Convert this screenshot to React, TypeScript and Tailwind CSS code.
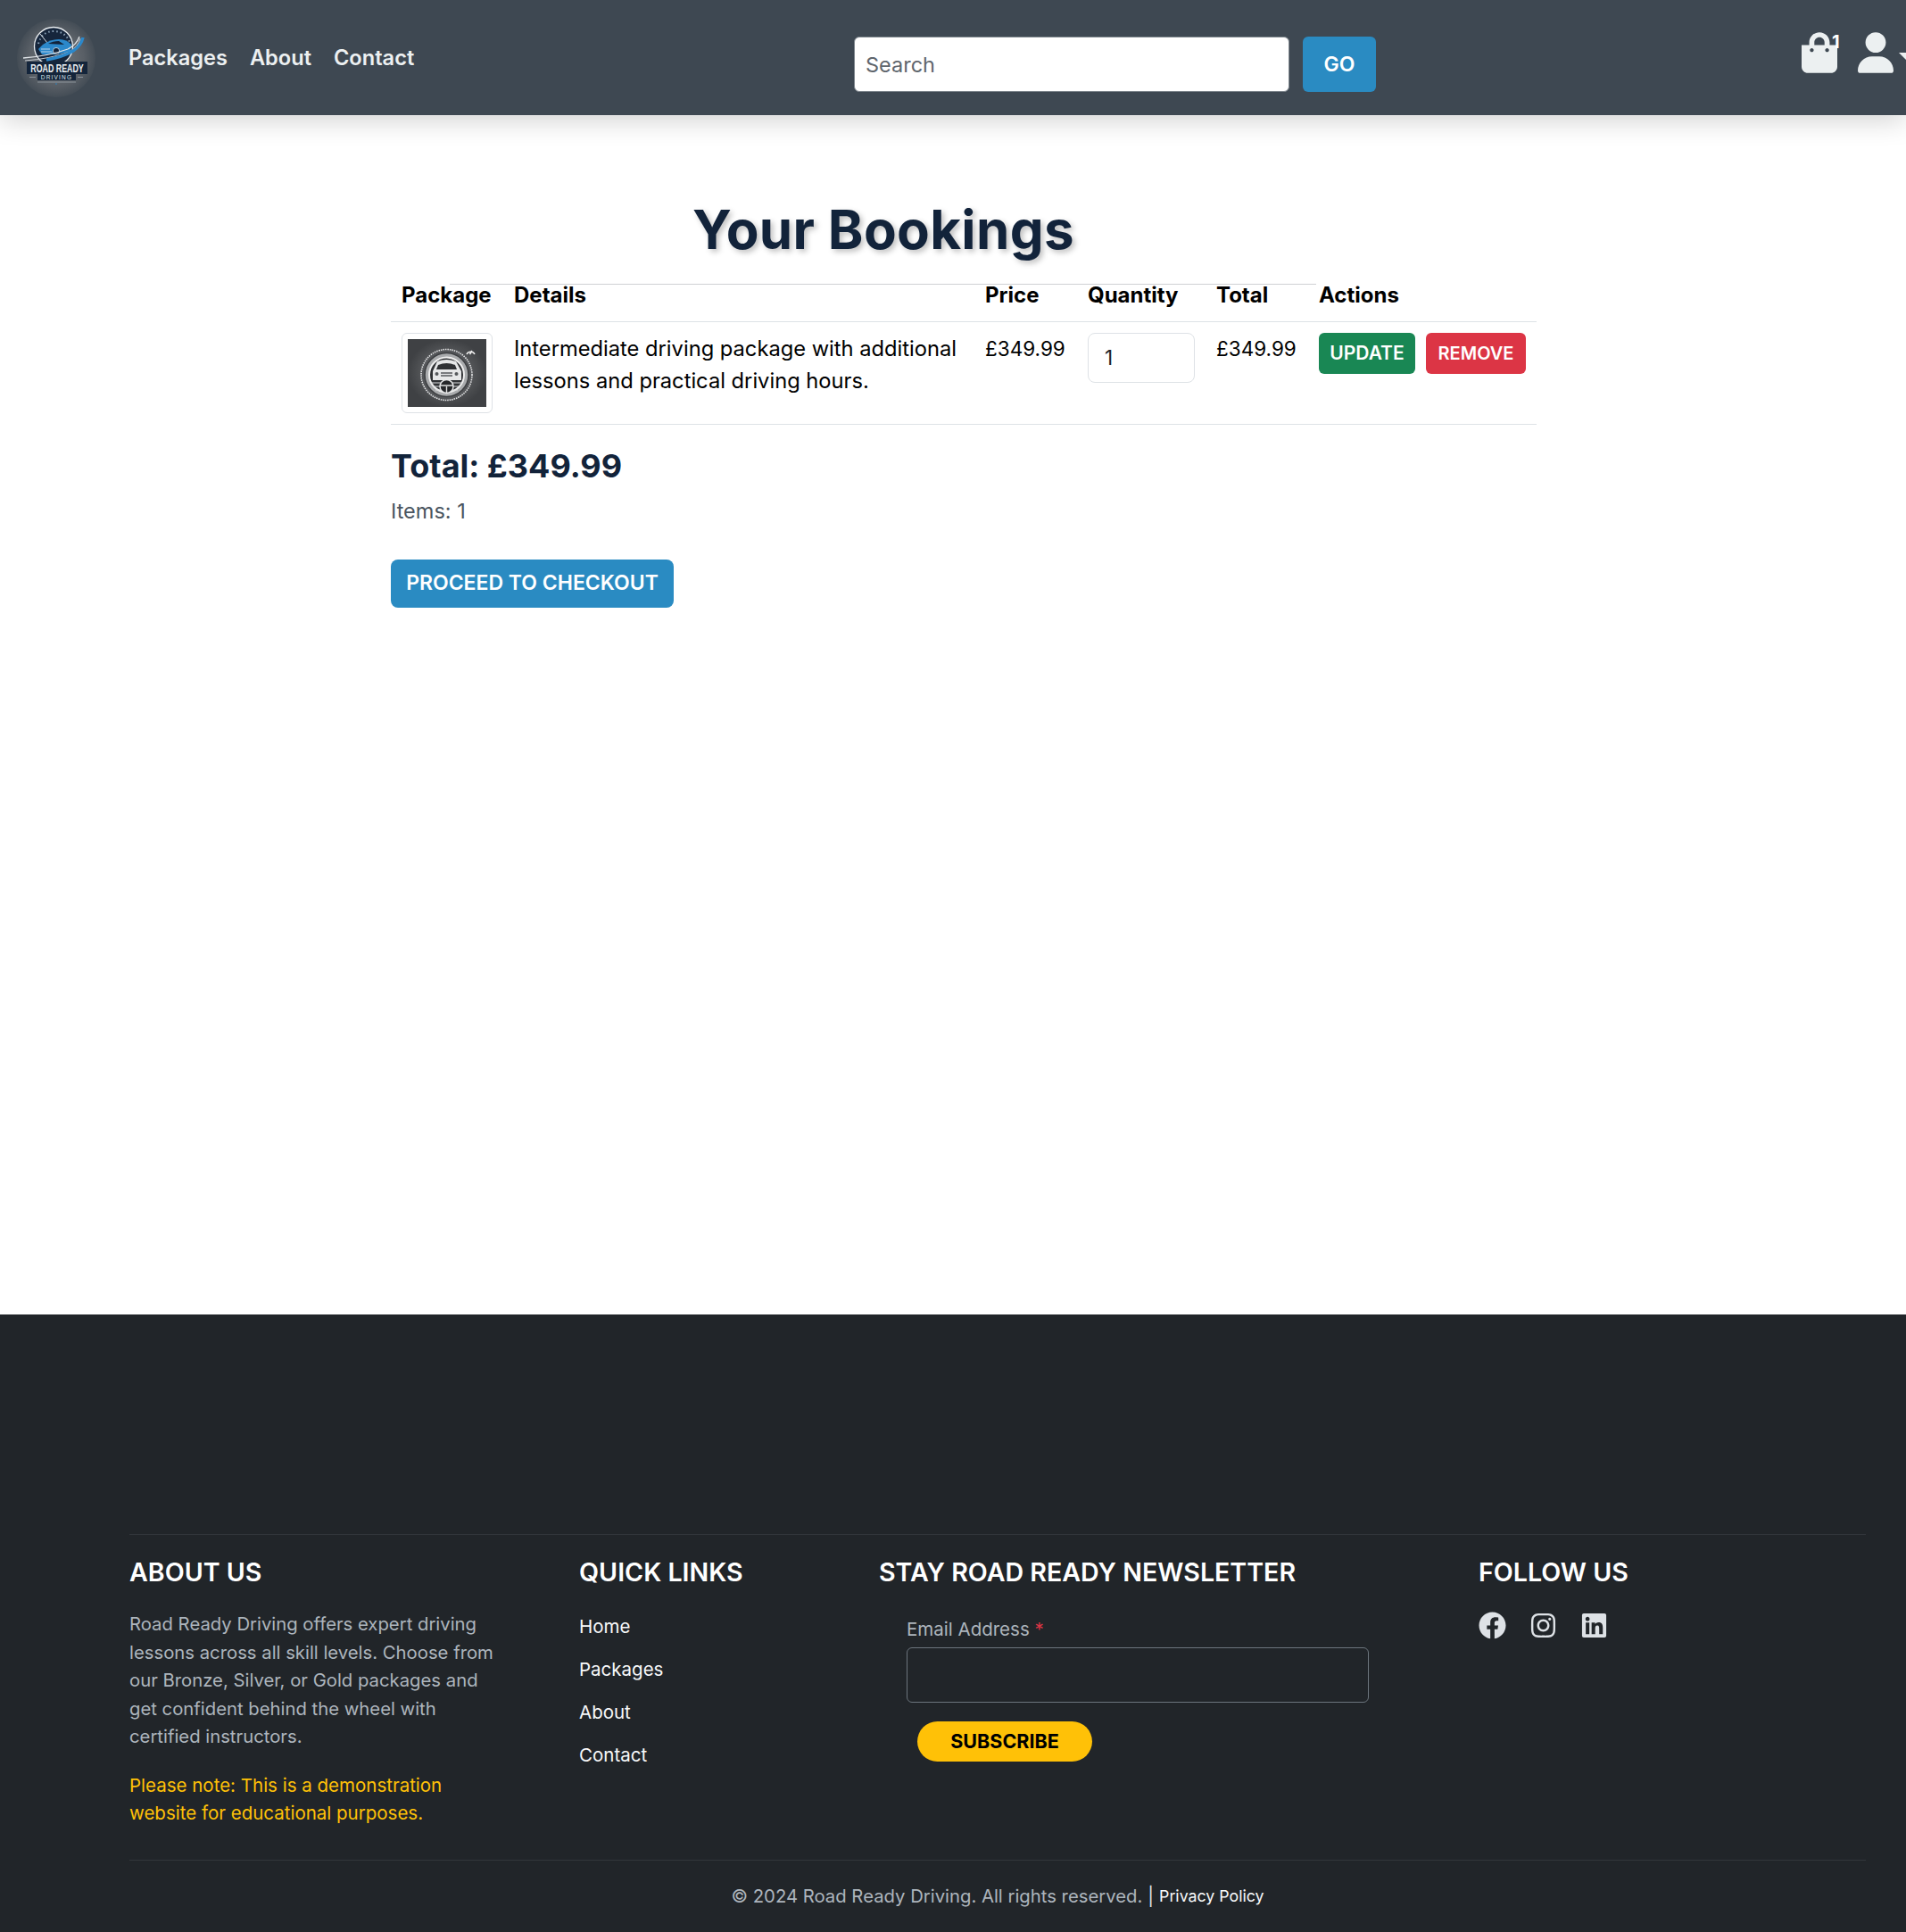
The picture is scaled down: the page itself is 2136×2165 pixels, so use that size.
import { FaFacebook, FaInstagram, FaLinkedin, FaShoppingBag } from "react-icons/fa";
import { FaUser } from "react-icons/fa6";

function Logo() {
  return (
    <svg viewBox="0 0 90 90" className="mt-[3px] h-[90px] w-[90px] shrink-0">
      <defs>
        <radialGradient id="logoBg">
          <stop offset="0%" stopColor="#73787d" />
          <stop offset="70%" stopColor="#595f66" />
          <stop offset="100%" stopColor="#444d56" />
        </radialGradient>
      </defs>
      <circle cx="45" cy="44" r="44" fill="url(#logoBg)" />
      {/* dial */}
      <circle cx="42" cy="31" r="21.5" fill="#16263c" stroke="#e8ecef" strokeWidth="1.3" />
      <path d="M25 28 Q29 14 42 14 Q55 14 60 26" fill="none" stroke="#8fa6bb" strokeWidth="2" strokeDasharray="1.5 3" />
      <path d="M27 17 L35 27" stroke="#d5dde4" strokeWidth="1" />
      {/* car */}
      <path d="M25 34 L30 29 Q38 23 48 23 Q57 23 62 29 L61 37 L44 40 H29 Z" fill="#2b88cb" />
      <path d="M36 28 Q41 25 48 25 L54 29 Z" fill="#12233a" />
      <path d="M28 34 H38 M28 37 H40" stroke="#dfe9f2" strokeWidth="0.8" />
      <circle cx="45" cy="36" r="3.6" fill="#12233a" stroke="#d7e3ee" strokeWidth="0.8" />
      {/* road */}
      <path d="M8 44 Q36 42 58 34 Q68 29 71 20" fill="none" stroke="#e0e4e8" strokeWidth="1.3" />
      <path d="M10 47 Q38 45 60 37 Q70 31 72 22" fill="none" stroke="#c6ccd2" strokeWidth="1" />
      <path d="M34 46 Q52 43 64 36 Q73 30 75 21" fill="none" stroke="#2b88cb" strokeWidth="3.4" />
      {/* wordmark */}
      <rect x="12" y="48" width="68" height="14" fill="#14253b" />
      <text transform="translate(46 60) scale(0.68 1)" textAnchor="middle" fontFamily="Liberation Sans, sans-serif" fontSize="13" fontWeight="700" fill="#eef2f5">ROAD READY</text>
      <rect x="24" y="62" width="43" height="7" fill="#14253b" />
      <text x="45.5" y="68" textAnchor="middle" fontFamily="Liberation Sans, sans-serif" fontSize="6.5" letterSpacing="1.2" fill="#dfe5ea">DRIVING</text>
      <path d="M15 65.5 H22 M69 65.5 H75 M24 71 H67" stroke="#9aa2aa" strokeWidth="0.8" />
      <circle cx="45" cy="73" r="0.8" fill="#2b88cb" />
    </svg>
  );
}

function PackageImage() {
  return (
    <svg viewBox="0 0 88 76" className="h-[76px] w-[88px]">
      <defs>
        <radialGradient id="thumbBg">
          <stop offset="0%" stopColor="#77797b" />
          <stop offset="100%" stopColor="#3f4144" />
        </radialGradient>
      </defs>
      <rect width="88" height="76" fill="url(#thumbBg)" />
      <circle cx="43.5" cy="40" r="28.5" fill="#55575a" stroke="#e6e7e8" strokeWidth="1.6" strokeDasharray="1.5 1" />
      <circle cx="43.5" cy="40" r="24.5" fill="#a9abad" stroke="#3d3f42" strokeWidth="1.5" />
      <circle cx="43.5" cy="40" r="19.5" fill="#2f3134" stroke="#efefef" strokeWidth="2" />
      <path d="M28 36 L33 25 Q43.5 21 54 25 L60 36 L60 46 L28 46 Z" fill="#e6e7e8" />
      <path d="M34 29 Q43.5 25 53 29 L55 34 H32 Z" fill="#2f3134" />
      <path d="M37 38 H50 M37 41 H50" stroke="#55585b" strokeWidth="1.3" />
      <circle cx="32.5" cy="39" r="2" fill="#55585b" />
      <circle cx="54.5" cy="39" r="2" fill="#55585b" />
      <path d="M26 49 H61 M28 53 H59 M31 57 H56" stroke="#dcdddf" strokeWidth="1.2" />
      <circle cx="43.5" cy="53" r="7.5" fill="#26282b" stroke="#e8e9ea" strokeWidth="1.5" />
      <path d="M37 52 H50 M43.5 53 V60" stroke="#e0e1e2" strokeWidth="1.4" />
      <path d="M66 17 A5 5 0 0 1 75 17 M69.5 17 L72 13" fill="none" stroke="#f0f0f0" strokeWidth="1.5" />
    </svg>
  );
}

export default function App() {
  return (
    <div className="w-full overflow-hidden bg-white font-['Inter',sans-serif]">
      <nav className="relative z-10 flex h-[129px] items-center bg-[#3e4852] pl-[18px] shadow-[0_4px_30px_rgba(0,0,0,0.2)]">
        <Logo />
        <div className="ml-9 flex gap-[25px] text-[23.6px] font-semibold text-[#ecf0f1]">
          <a>Packages</a>
          <a>About</a>
          <a>Contact</a>
        </div>
        <div className="absolute left-[957px] top-[41px] flex gap-[15px]">
          <input
            placeholder="Search"
            className="h-[62px] w-[488px] rounded-md border border-[#7d858c] bg-white px-3 text-[23.5px] placeholder:text-[#5f666d]"
          />
          <button className="h-[62px] w-[82px] rounded-md bg-[#2a8bc2] text-[23px] font-semibold text-white">GO</button>
        </div>
        <div className="absolute left-[2019px] top-[36px] flex text-[#ecf0f1]">
          <FaShoppingBag className="h-[46px] w-[40px]" />
          <span className="-ml-[6px] mt-[-1px] text-xl leading-6 font-bold text-white">1</span>
          <FaUser className="ml-[20px] h-[46px] w-[40px]" />
          <span className="ml-[6px] mt-[23px] h-0 w-0 border-x-[9px] border-t-[9px] border-x-transparent border-t-[#ecf0f1]" />
        </div>
      </nav>

      <main className="flex h-[1344px] flex-col pl-[438px] pt-[92px]">
        <h1 className="ml-[338px] text-[60px] leading-[72px] font-bold tracking-[0.35px] text-[#12233a] [text-shadow:3px_3px_6px_rgba(0,0,0,0.25)]">
          Your Bookings
        </h1>
        <div className="ml-[66px] mt-[25px] h-px w-[971px] bg-[#cfd1d4]" />
        <table className="w-[1284px] table-fixed border-collapse text-[22.5px] text-black">
          <thead>
            <tr className="border-b border-[#dee2e6] text-left align-top text-[24px] leading-[24px]">
              <th className="h-[41px] w-[126px] px-3 font-bold">Package</th>
              <th className="w-[528px] px-3 font-bold">Details</th>
              <th className="w-[115px] px-3 font-bold">Price</th>
              <th className="w-[144px] px-3 font-bold">Quantity</th>
              <th className="w-[115px] px-3 font-bold">Total</th>
              <th className="px-3 font-bold">Actions</th>
            </tr>
          </thead>
          <tbody>
            <tr className="border-b border-[#dee2e6] align-top">
              <td className="h-[115px] px-3 pt-3">
                <div className="flex h-[90px] w-[102px] items-center justify-center rounded-md border border-[#dee2e6] bg-white">
                  <PackageImage />
                </div>
              </td>
              <td className="px-3 pt-3 text-[23.7px] leading-9">Intermediate driving package with additional lessons and practical driving hours.</td>
              <td className="px-3 pt-3 leading-9">£349.99</td>
              <td className="px-3 pt-3">
                <input
                  defaultValue="1"
                  className="h-[56px] w-[120px] rounded-lg border border-[#dee2e6] px-[18px] text-[22.5px] text-[#212529]"
                />
              </td>
              <td className="px-3 pt-3 leading-9">£349.99</td>
              <td className="px-3 pt-3">
                <div className="flex gap-3">
                  <button className="h-[46px] w-[108px] rounded-md bg-[#198754] text-[21px] font-semibold text-white">UPDATE</button>
                  <button className="h-[46px] w-[112px] rounded-md bg-[#dc3545] text-[20px] font-semibold text-white">REMOVE</button>
                </div>
              </td>
            </tr>
          </tbody>
        </table>
        <h2 className="mt-6 text-[36px] leading-[44px] font-bold text-[#12233a]">Total: £349.99</h2>
        <p className="mt-[11px] text-[23.5px] leading-9 text-[#4a5560]">Items: 1</p>
        <button className="mt-[36px] h-[54px] w-[317px] rounded-lg bg-[#2a8bc2] text-[23px] font-semibold whitespace-nowrap text-white">PROCEED TO CHECKOUT</button>
      </main>

      <footer className="h-[692px] bg-[#212529] pl-[145px] pr-[45px] pt-[246px]">
        <div className="grid h-[365px] grid-cols-[504px_336px_672px_1fr] border-t border-[#32363b] pt-6 text-[22px]">
          <div>
            <h3 className="text-[28.6px] leading-9 font-semibold text-white">ABOUT US</h3>
            <p className="mt-[24px] w-[415px] text-[20.3px] leading-[31.5px] text-[#adb5bd]">
              Road Ready Driving offers expert driving lessons across all skill levels. Choose from our Bronze, Silver, or Gold packages and get confident behind the wheel with certified instructors.
            </p>
            <p className="mt-[23px] w-[400px] text-[20.5px] leading-[31.5px] text-[#ffc107]">
              Please note: This is a demonstration website for educational purposes.
            </p>
          </div>
          <div>
            <h3 className="text-[28.6px] leading-9 font-semibold text-white">QUICK LINKS</h3>
            <ul className="mt-[28px] flex flex-col gap-[18px] text-[20.5px] leading-[30px] text-[#f8f9fa]">
              <li>Home</li>
              <li>Packages</li>
              <li>About</li>
              <li>Contact</li>
            </ul>
          </div>
          <div>
            <h3 className="text-[28.6px] leading-9 font-semibold text-white">STAY ROAD READY NEWSLETTER</h3>
            <div className="ml-[31px] mt-[29px]">
              <label className="text-[20.5px] leading-[30px] text-[#adb5bd]">
                Email Address <span className="text-[#dc3545]">*</span>
              </label>
              <input className="mt-[4px] block h-[62px] w-[518px] rounded-md border border-[#6c757d] bg-[#212529]" />
              <button className="ml-3 mt-[21px] h-[45px] w-[196px] rounded-full bg-[#ffc107] text-[21.5px] font-bold text-black">SUBSCRIBE</button>
            </div>
          </div>
          <div>
            <h3 className="text-[28.6px] leading-9 font-semibold text-white">FOLLOW US</h3>
            <div className="mt-[26px] flex items-center gap-[26px] text-[#dee2e6]">
              <FaFacebook size={31} />
              <FaInstagram size={31} />
              <FaLinkedin size={31} />
            </div>
          </div>
        </div>
        <div className="flex h-[81px] items-center justify-center border-t border-[#32363b] text-[20.3px] text-[#adb5bd]">
          <span>© 2024 Road Ready Driving. All rights reserved.</span>
          <span className="ml-[6px] text-[#dee2e6]">|</span>
          <a className="ml-[6px] text-[17.75px] text-[#f8f9fa]">Privacy Policy</a>
        </div>
      </footer>
    </div>
  );
}
